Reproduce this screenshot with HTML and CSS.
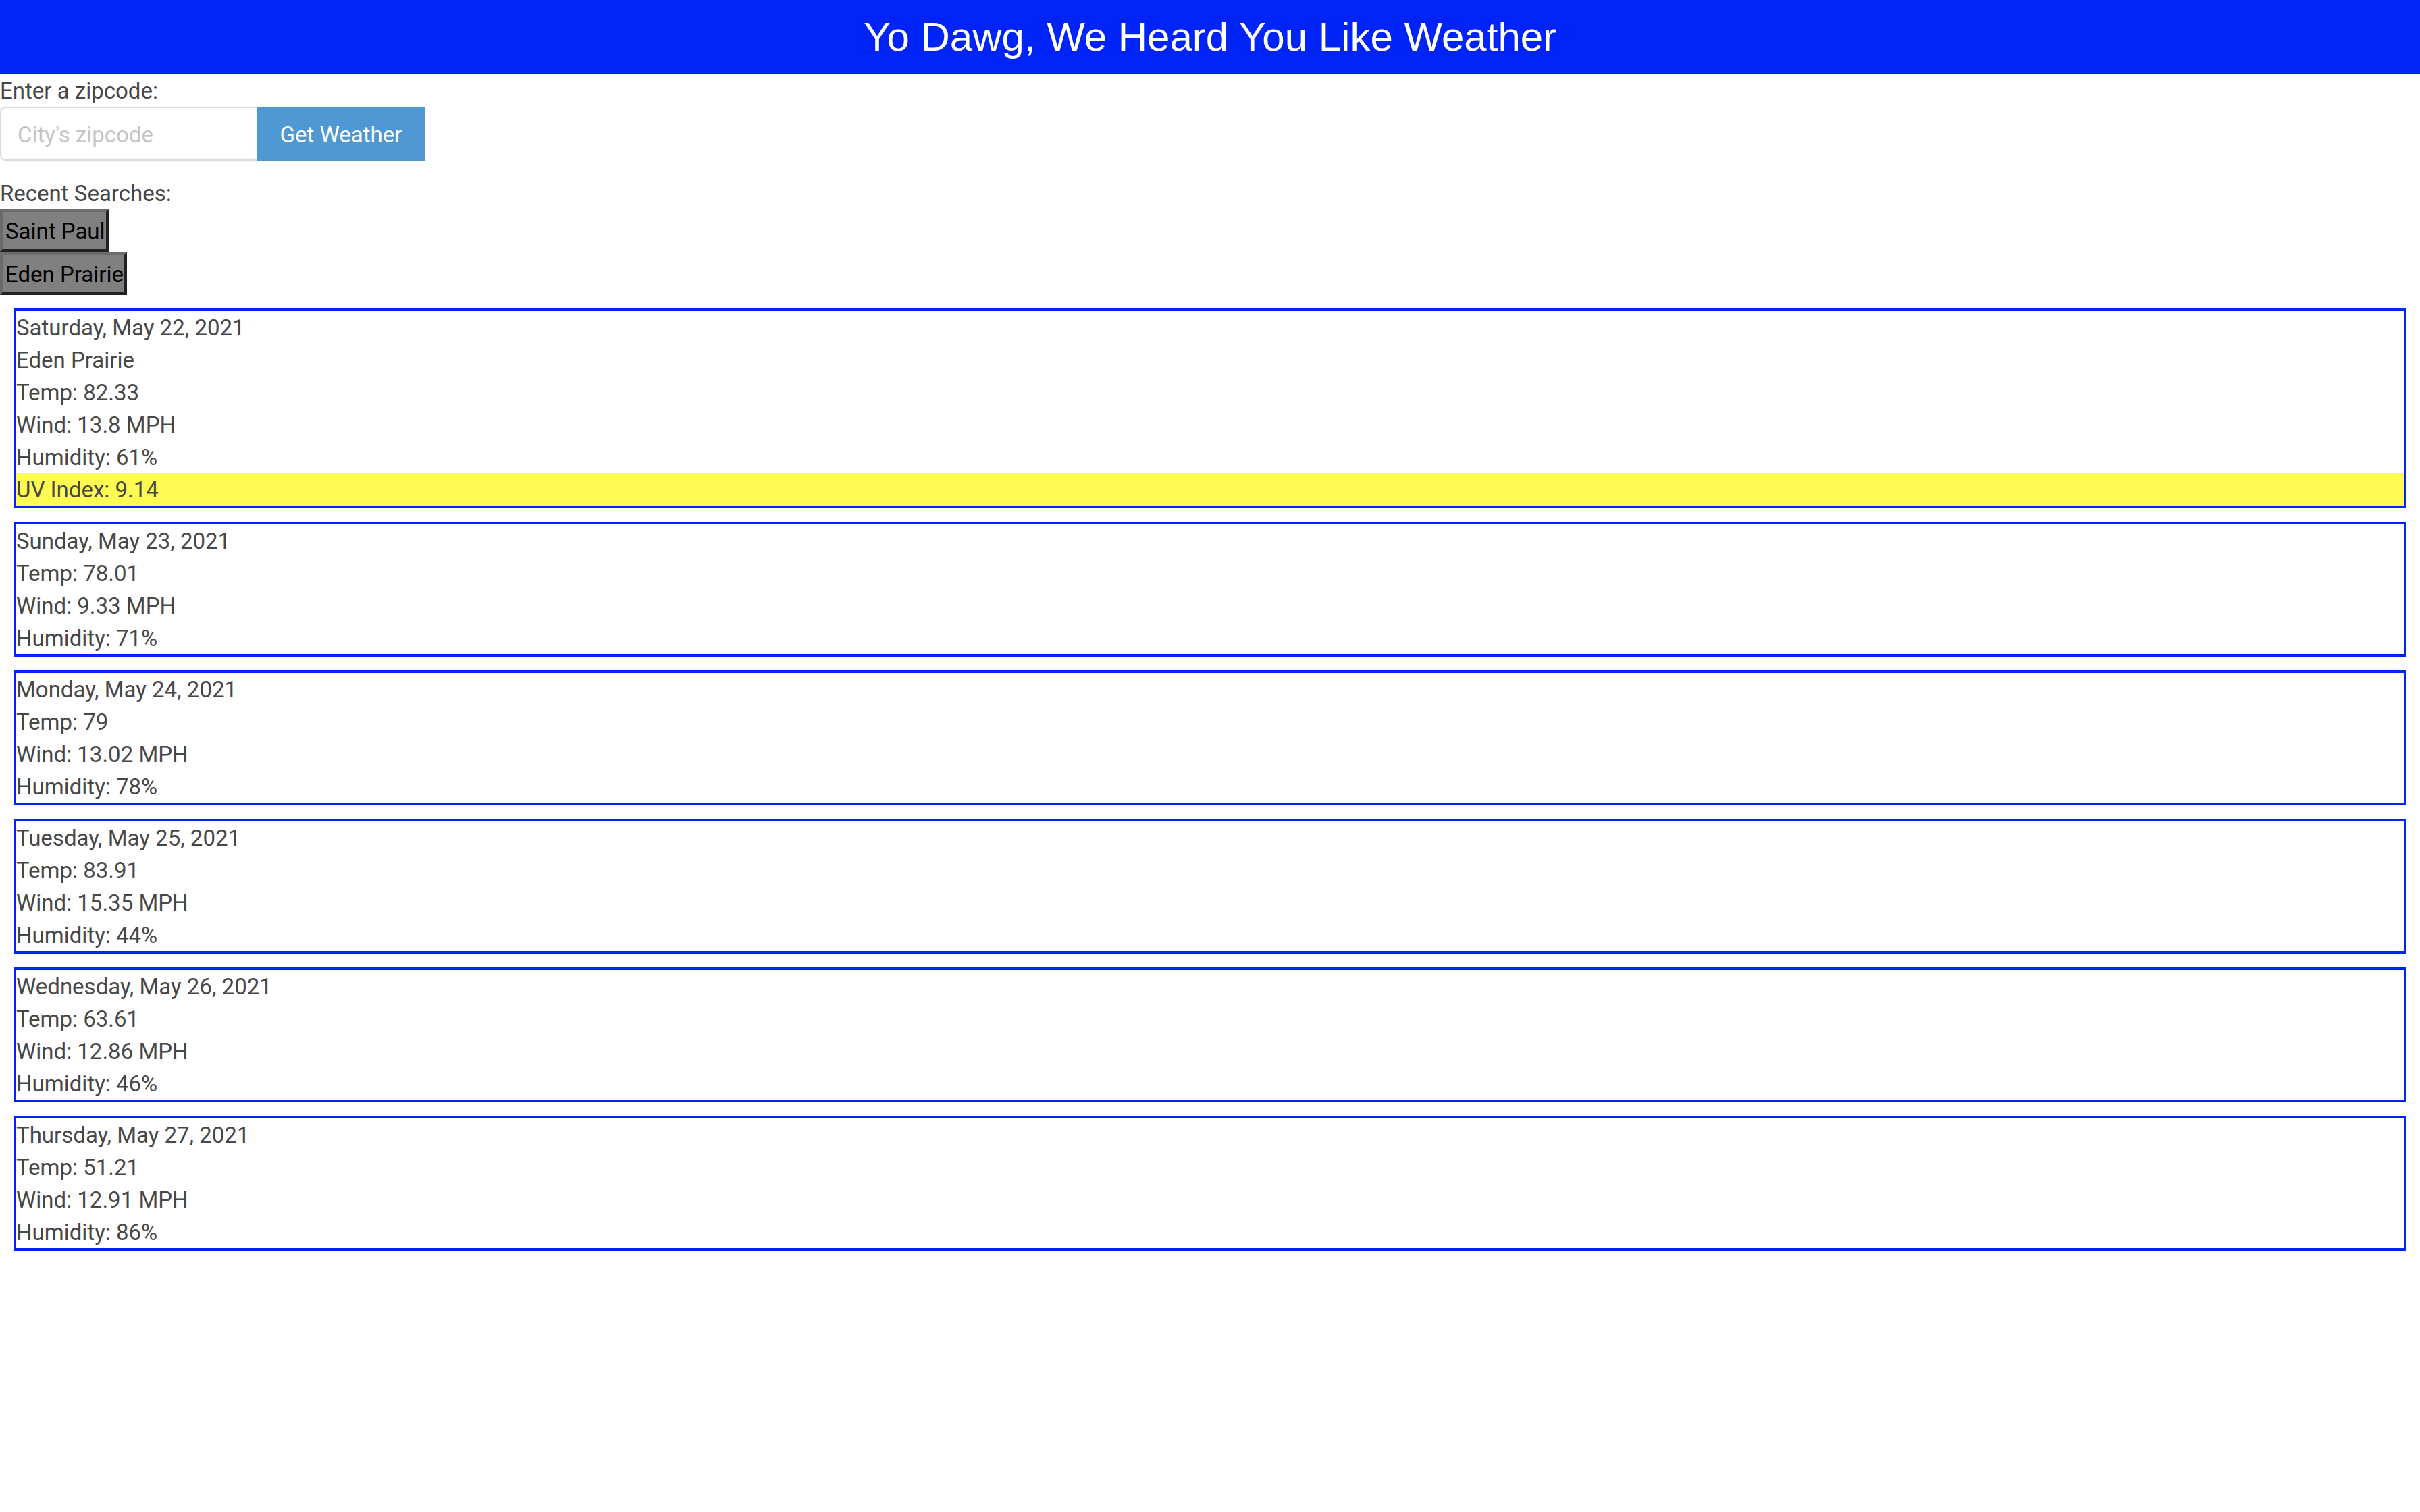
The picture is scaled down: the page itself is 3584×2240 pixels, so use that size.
FILE: index.html
```html
<!DOCTYPE html>
<html lang="en">
<head>
<meta charset="utf-8">
<title>Weather Dashboard</title>
<link rel="stylesheet" href="styles.css">
</head>
<body>
<header class="site-header">
  <h1 class="site-title">Yo Dawg, We Heard You Like Weather</h1>
</header>
<main>
  <section class="search">
    <label class="field-label" for="zip">Enter a zipcode:</label>
    <div class="input-group">
      <input id="zip" class="zip-input" type="text" placeholder="City's zipcode">
      <button class="get-btn" type="button">Get Weather</button>
    </div>
    <div class="field-label">Recent Searches:</div>
    <div class="history">
      <button class="history-btn" type="button">Saint Paul</button>
      <button class="history-btn" type="button">Eden Prairie</button>
    </div>
  </section>
  <section class="forecast">
    <div class="day-card">
      <p class="line">Saturday, May 22, 2021</p>
      <p class="line">Eden Prairie</p>
      <p class="line">Temp: 82.33</p>
      <p class="line">Wind: 13.8 MPH</p>
      <p class="line">Humidity: 61%</p>
      <p class="line uv-high">UV Index: 9.14</p>
    </div>
    <div class="day-card">
      <p class="line">Sunday, May 23, 2021</p>
      <p class="line">Temp: 78.01</p>
      <p class="line">Wind: 9.33 MPH</p>
      <p class="line">Humidity: 71%</p>
    </div>
    <div class="day-card">
      <p class="line">Monday, May 24, 2021</p>
      <p class="line">Temp: 79</p>
      <p class="line">Wind: 13.02 MPH</p>
      <p class="line">Humidity: 78%</p>
    </div>
    <div class="day-card">
      <p class="line">Tuesday, May 25, 2021</p>
      <p class="line">Temp: 83.91</p>
      <p class="line">Wind: 15.35 MPH</p>
      <p class="line">Humidity: 44%</p>
    </div>
    <div class="day-card">
      <p class="line">Wednesday, May 26, 2021</p>
      <p class="line">Temp: 63.61</p>
      <p class="line">Wind: 12.86 MPH</p>
      <p class="line">Humidity: 46%</p>
    </div>
    <div class="day-card">
      <p class="line">Thursday, May 27, 2021</p>
      <p class="line">Temp: 51.21</p>
      <p class="line">Wind: 12.91 MPH</p>
      <p class="line">Humidity: 86%</p>
    </div>
  </section>
</main>
</body>
</html>
```
FILE: styles.css
```css
* {
  box-sizing: border-box;
}

html, body {
  margin: 0;
  padding: 0;
  background: #ffffff;
}

body {
  font-family: Roboto, "Liberation Sans", sans-serif;
  font-size: 33px;
  line-height: 48px;
  color: #474747;
}

.site-header {
  height: 110px;
  background: #0024f5;
  display: flex;
  align-items: center;
  justify-content: center;
}

.site-title {
  margin: 0;
  font-family: "Liberation Sans", Arial, sans-serif;
  font-weight: normal;
  font-size: 60px;
  line-height: 1;
  color: #ffffff;
}

.field-label {
  display: block;
  padding-top: 2px;
  line-height: 46px;
}

.input-group {
  display: flex;
  height: 80px;
  margin-bottom: 24px;
}

.zip-input {
  width: 380px;
  height: 80px;
  margin: 0;
  padding: 2px 24px 0;
  border: 2px solid #d9d9d9;
  border-right: none;
  border-radius: 8px 0 0 8px;
  font-family: Roboto, "Liberation Sans", sans-serif;
  font-size: 33px;
  color: #474747;
  outline: none;
}

.zip-input::placeholder {
  color: #c4c4c4;
}

.get-btn {
  width: 250px;
  height: 80px;
  margin: 0;
  padding: 2px 0 0;
  border: none;
  background: #4f98d4;
  color: #ffffff;
  font-family: Roboto, "Liberation Sans", sans-serif;
  font-size: 33px;
}

.history {
  display: flex;
  flex-direction: column;
  align-items: flex-start;
  gap: 1px;
}

.history-btn {
  display: block;
  margin: 0;
  padding: 5px 1px 2px 4px;
  background: #808080;
  border-style: solid;
  border-width: 4px;
  border-color: #6b6b6b #222222 #222222 #6b6b6b;
  color: #000000;
  font-family: Roboto, "Liberation Sans", sans-serif;
  font-size: 33px;
  line-height: 48px;
}

.forecast {
  padding-top: 0.1px;
}

.day-card {
  margin: 20px;
  border: 4px solid #0024f5;
}

.line {
  margin: 0;
  padding-top: 2px;
  line-height: 46px;
}

.uv-high {
  background: #fffb52;
}
```
